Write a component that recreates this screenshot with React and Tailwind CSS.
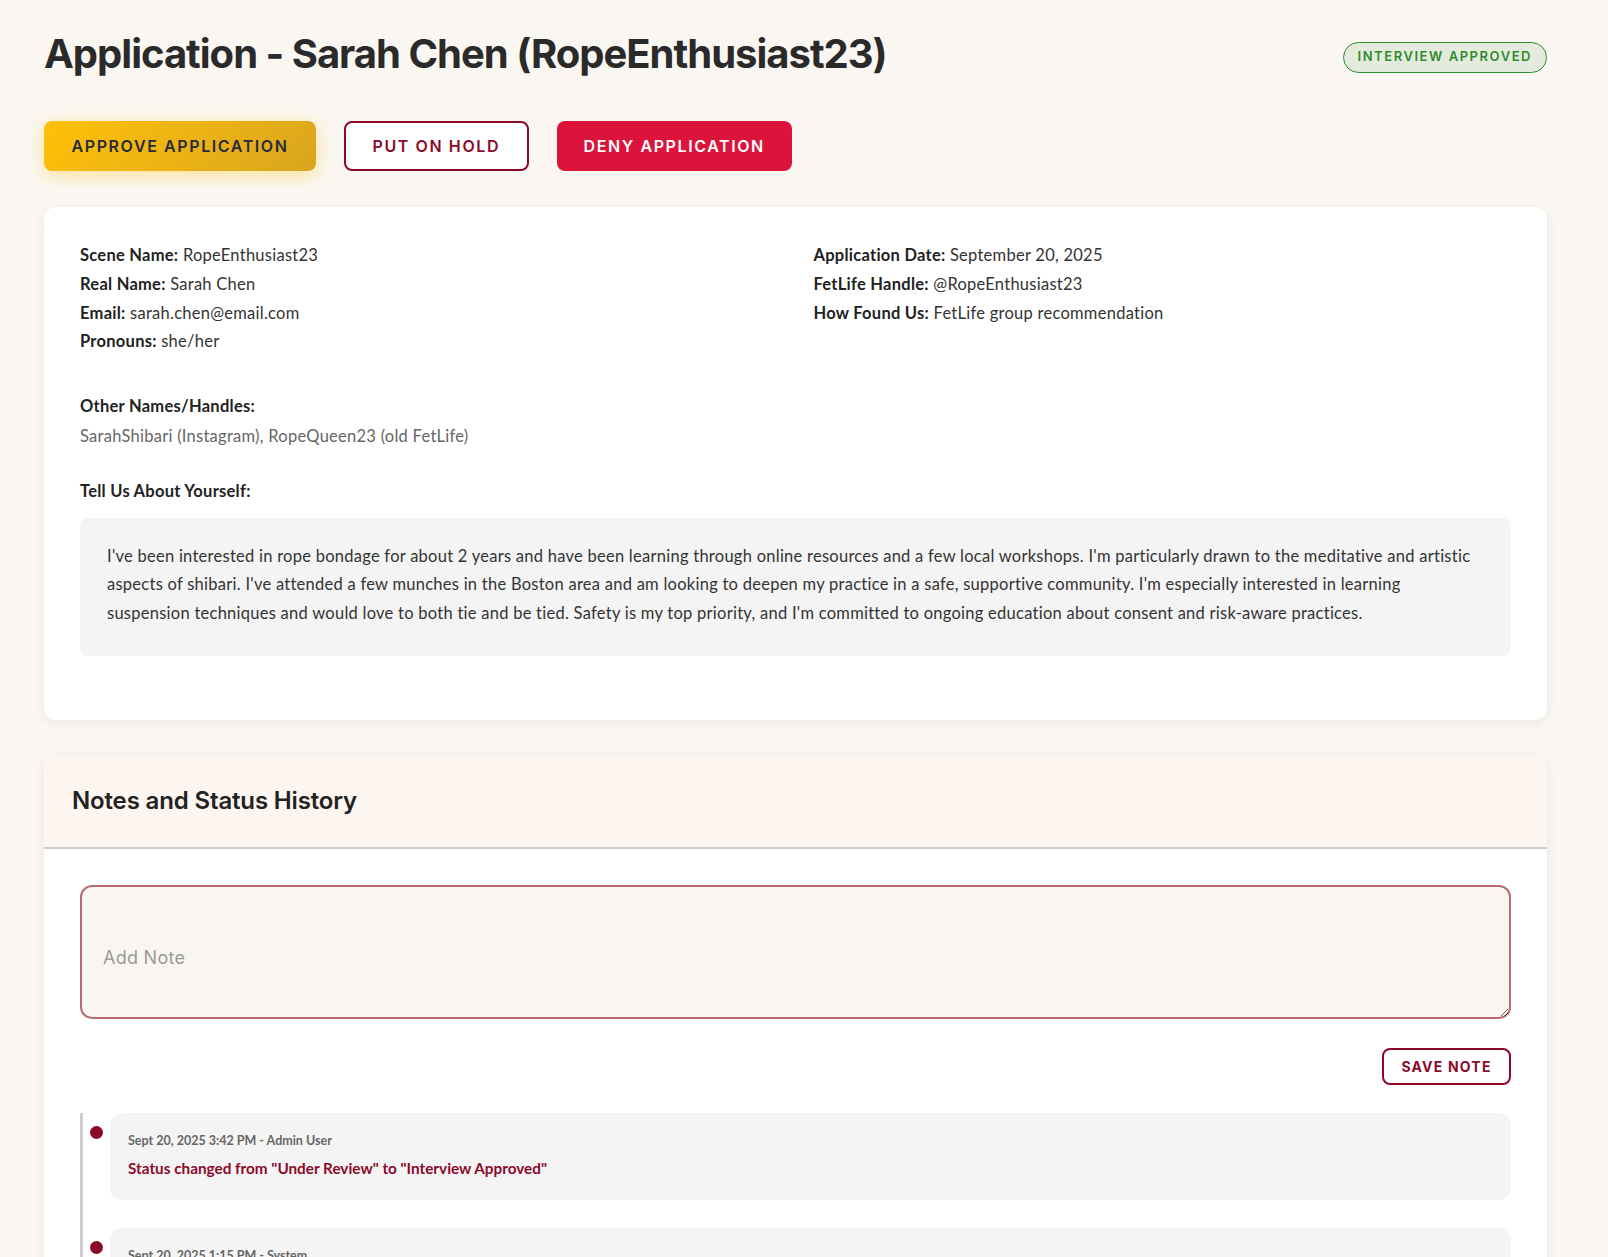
import React from "react";

const H = "font-['Inter','Noto_Sans',sans-serif]";

function Field({ label, value }) {
  return (
    <div className="leading-[28.8px]">
      <span className="font-bold text-[#222]">{label}</span>{" "}
      <span className="text-[#333]">{value}</span>
    </div>
  );
}

function Entry({ meta, text, color = "text-[#8b0a2a]" }) {
  return (
    <div className="relative pl-[27px]">
      <div className="absolute left-[7px] top-[13px] w-[13px] h-[13px] rounded-full bg-[#8b0a2a]" />
      <div className="bg-[#f4f4f4] rounded-[12px] pl-[18px] pr-[18px] pt-[18px] pb-[21px]">
        <div className="text-[12.5px] font-bold text-[#666] leading-[20px] tracking-normal">{meta}</div>
        <div className={`mt-[6px] text-[15.3px] font-bold leading-[22px] tracking-normal ${color}`}>{text}</div>
      </div>
    </div>
  );
}

export default function App() {
  return (
    <div className="min-h-screen bg-[#faf7f2] font-['Lato','Noto_Sans',sans-serif] text-[16.5px] tracking-[0.26px] text-[#333]">
      <div className="pl-[44px] pr-[61px] pt-[30px] pb-[60px]">
        <div className="flex items-center justify-between">
          <h1 className={`${H} text-[40px] leading-[48px] font-bold text-[#2a2a2a] tracking-[-1px]`}>
            Application - Sarah Chen (RopeEnthusiast23)
          </h1>
          <span className={`${H} mt-[6px] inline-flex items-center h-[31px] px-[14px] rounded-full border border-[#2e8b2e] bg-[#e4ebdd] text-[#2e8b2e] text-[13px] font-semibold tracking-[1.55px]`}>
            INTERVIEW APPROVED
          </span>
        </div>

        <div className={`${H} flex gap-[27.5px] mt-[43px]`}>
          <button className="h-[50px] px-[27.5px] rounded-[8px] bg-[linear-gradient(135deg,#ffc107,#d9a520)] text-[#2a2a3a] text-[16px] font-semibold tracking-[1.6px] shadow-[0_4px_18px_rgba(255,193,7,0.4)]">
            APPROVE APPLICATION
          </button>
          <button className="h-[50px] px-[27px] rounded-[8px] border-2 border-[#8b0a2a] bg-white text-[#8b0a2a] text-[16px] font-semibold tracking-[1.6px]">
            PUT ON HOLD
          </button>
          <button className="h-[50px] px-[27px] rounded-[8px] bg-[#dc143c] text-white text-[16px] font-semibold tracking-[1.6px]">
            DENY APPLICATION
          </button>
        </div>

        <div className="mt-[36px] bg-white rounded-[12px] shadow-[0_2px_12px_rgba(0,0,0,0.07)] px-[36px] pt-[34px] pb-[64px]">
          <div className="grid grid-cols-2 gap-x-[36px]">
            <div>
              <Field label="Scene Name:" value="RopeEnthusiast23" />
              <Field label="Real Name:" value="Sarah Chen" />
              <Field label="Email:" value="sarah.chen@email.com" />
              <Field label="Pronouns:" value="she/her" />
            </div>
            <div>
              <Field label="Application Date:" value="September 20, 2025" />
              <Field label="FetLife Handle:" value="@RopeEnthusiast23" />
              <Field label="How Found Us:" value="FetLife group recommendation" />
            </div>
          </div>

          <div className="mt-[36px] leading-[28.8px] font-bold text-[#222]">Other Names/Handles:</div>
          <div className="mt-[1px] leading-[28.8px] text-[#666]">SarahShibari (Instagram), RopeQueen23 (old FetLife)</div>

          <div className="mt-[26px] leading-[28.8px] font-bold text-[#222]">Tell Us About Yourself:</div>
          <div className="mt-[12px] bg-[#f4f4f4] rounded-[8px] px-[27px] pt-[24px] pb-[28px] leading-[28.7px] text-[#333]">
            <div className="whitespace-nowrap">I've been interested in rope bondage for about 2 years and have been learning through online resources and a few local workshops. I'm particularly drawn to the meditative and artistic</div>
            <div className="whitespace-nowrap">aspects of shibari. I've attended a few munches in the Boston area and am looking to deepen my practice in a safe, supportive community. I'm especially interested in learning</div>
            <div className="whitespace-nowrap">suspension techniques and would love to both tie and be tied. Safety is my top priority, and I'm committed to ongoing education about consent and risk-aware practices.</div>
          </div>
        </div>

        <div className="mt-[36px] bg-white rounded-[12px] shadow-[0_2px_12px_rgba(0,0,0,0.07)] overflow-hidden">
          <div className="h-[93px] flex items-center px-[28px] bg-[#fdf6f0] border-b-2 border-[#cccccc] rounded-t-[12px]">
            <h2 className={`${H} text-[24px] font-semibold text-[#222] tracking-[-0.15px]`}>Notes and Status History</h2>
          </div>
          <div className="px-[36px] pt-[36px] pb-[40px]">
            <textarea
              placeholder="Add Note"
              className={`${H} block w-full h-[134px] rounded-[12px] border-2 border-[#b86b73] bg-[#f9f6f2] px-[21px] pt-[57px] pb-[10px] text-[18px] text-[#333] placeholder:text-[#999] outline-none`}
            />
            <div className="flex justify-end mt-[29px]">
              <button className={`${H} h-[37px] w-[129px] rounded-[8px] border-2 border-[#8b0a2a] bg-white text-[#8b0a2a] text-[14px] font-bold tracking-[1.2px]`}>
                SAVE NOTE
              </button>
            </div>
            <div className="mt-[28px] border-l-[3px] border-[#cccccc] flex flex-col gap-[28px]">
              <Entry meta="Sept 20, 2025 3:42 PM - Admin User" text={'Status changed from "Under Review" to "Interview Approved"'} />
              <Entry meta="Sept 20, 2025 1:15 PM - System" text="Application submitted" />
            </div>
          </div>
        </div>
      </div>
    </div>
  );
}
